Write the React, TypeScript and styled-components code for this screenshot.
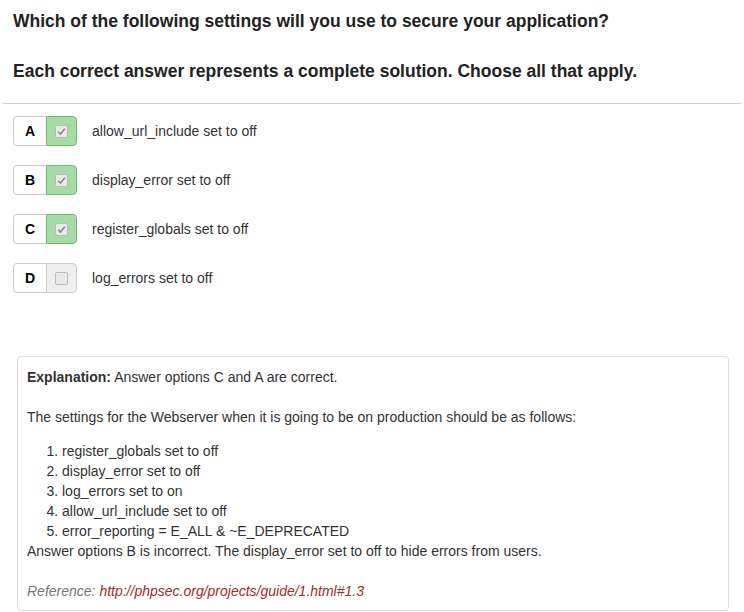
import React from "react";
import styled, { createGlobalStyle } from "styled-components";

const Global = createGlobalStyle`
  html, body { margin: 0; padding: 0; background: #fff; }
  body { font-family: "Liberation Sans", Arial, sans-serif; color: #333; font-size: 14px; line-height: 20px; }
`;

const Page = styled.div`
  padding: 11px 3px 0 3px;
  width: 744px;
  box-sizing: border-box;
`;

const Heading = styled.h3`
  margin: 0;
  padding: 0 10px;
  font-size: 17.5px;
  font-weight: bold;
  line-height: 20px;
  color: #222;
`;

const HeadingGap = styled.div`
  height: 30px;
`;

const Rule = styled.hr`
  margin: 22px 0 12px 0;
  border: 0;
  border-top: 1px solid #ccc;
`;

const Options = styled.div`
  display: flex;
  flex-direction: column;
  gap: 19px;
  padding: 0 10px;
`;

const OptionRow = styled.div`
  display: flex;
  align-items: center;
  gap: 15px;
`;

const Group = styled.div`
  display: flex;
  height: 30px;
  border-radius: 4px;
  overflow: hidden;
`;

const Letter = styled.div`
  display: flex;
  align-items: center;
  justify-content: center;
  font-weight: bold;
  font-size: 14px;
  color: #000;
  border: 1px solid #ccc;
  border-right: 0;
  border-radius: 4px 0 0 4px;
  box-sizing: border-box;
  width: 33px;
`;

const CheckCell = styled.div<{ $on: boolean }>`
  width: 31px;
  display: flex;
  align-items: center;
  justify-content: center;
  box-sizing: border-box;
  border: 1px solid ${(p) => (p.$on ? "#6fbf6f" : "#ccc")};
  border-radius: 0 4px 4px 0;
  background: ${(p) => (p.$on ? "#a5dba5" : "#eee")};
`;

const Box = styled.span`
  width: 13px;
  height: 13px;
  box-sizing: border-box;
  border: 1px solid #bbb;
  border-radius: 2px;
  background: #e9e9e9;
  display: flex;
  align-items: center;
  justify-content: center;
`;

const OptionText = styled.span`
  font-size: 14px;
  color: #333;
`;

const Explanation = styled.div`
  margin: 63px 12px 0 14px;
  border: 1px solid #ddd;
  border-radius: 4px;
  padding: 10px 9px 9px 9px;
  color: #333;
`;

const P = styled.p<{ $last?: boolean }>`
  margin: 0 0 ${(p) => (p.$last ? "14px" : "20px")} 0;
`;

const List = styled.ol`
  margin: 0;
  padding-left: 35px;
`;

const Ref = styled.p`
  margin: 20px 0 0 0;
  font-style: italic;
  color: #777;
`;

const Link = styled.a`
  color: #a52a2a;
  text-decoration: none;
`;

function Check() {
  return (
    <svg width="9" height="9" viewBox="0 0 9 9">
      <path d="M1.2 4.8 L3.4 7 L7.8 1.8" fill="none" stroke="#888" strokeWidth="1.6" />
    </svg>
  );
}

const options = [
  { l: "A", t: "allow_url_include set to off", on: true },
  { l: "B", t: "display_error set to off", on: true },
  { l: "C", t: "register_globals set to off", on: true },
  { l: "D", t: "log_errors set to off", on: false },
];

export default function App() {
  return (
    <Page>
      <Global />
      <Heading>Which of the following settings will you use to secure your application?</Heading>
      <HeadingGap />
      <Heading>Each correct answer represents a complete solution. Choose all that apply.</Heading>
      <Rule />
      <Options>
        {options.map((o) => (
          <OptionRow key={o.l}>
            <Group>
              <Letter>{o.l}</Letter>
              <CheckCell $on={o.on}>
                <Box>{o.on && <Check />}</Box>
              </CheckCell>
            </Group>
            <OptionText>{o.t}</OptionText>
          </OptionRow>
        ))}
      </Options>
      <Explanation>
        <P>
          <b>Explanation:</b> Answer options C and A are correct.
        </P>
        <P $last>The settings for the Webserver when it is going to be on production should be as follows:</P>
        <List>
          <li>register_globals set to off</li>
          <li>display_error set to off</li>
          <li>log_errors set to on</li>
          <li>allow_url_include set to off</li>
          <li>error_reporting = E_ALL &amp; ~E_DEPRECATED</li>
        </List>
        Answer options B is incorrect. The display_error set to off to hide errors from users.
        <Ref>
          Reference: <Link href="#">http://phpsec.org/projects/guide/1.html#1.3</Link>
        </Ref>
      </Explanation>
    </Page>
  );
}
